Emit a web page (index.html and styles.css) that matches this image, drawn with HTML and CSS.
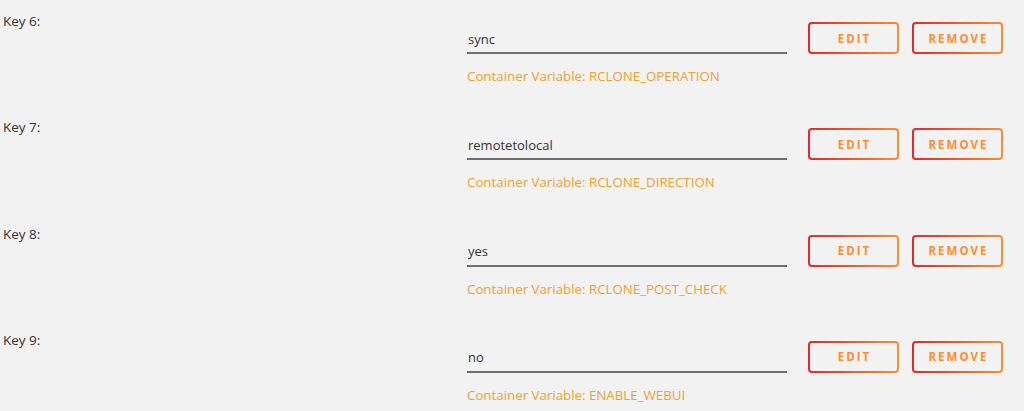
FILE: index.html
```html
<!doctype html>
<html lang="en">
<head>
  <title>Template variables</title>
  <meta charset="utf-8">
  <link rel="stylesheet" href="styles.css">
</head>
<body>

<div class="configList">

  <div class="configRow">
    <div class="configLabel">Key 6:</div>
    <div class="configBody">
      <div class="configLine">
        <input class="configInput" value="sync" readonly/>
        <button class="gradButton">Edit</button>
        <button class="gradButton">Remove</button>
      </div>
      <div class="configHint">Container Variable: RCLONE_OPERATION</div>
    </div>
  </div>

  <div class="configRow">
    <div class="configLabel">Key 7:</div>
    <div class="configBody">
      <div class="configLine">
        <input class="configInput" value="remotetolocal" readonly/>
        <button class="gradButton">Edit</button>
        <button class="gradButton">Remove</button>
      </div>
      <div class="configHint">Container Variable: RCLONE_DIRECTION</div>
    </div>
  </div>

  <div class="configRow">
    <div class="configLabel">Key 8:</div>
    <div class="configBody">
      <div class="configLine">
        <input class="configInput" value="yes" readonly/>
        <button class="gradButton">Edit</button>
        <button class="gradButton">Remove</button>
      </div>
      <div class="configHint">Container Variable: RCLONE_POST_CHECK</div>
    </div>
  </div>

  <div class="configRow">
    <div class="configLabel">Key 9:</div>
    <div class="configBody">
      <div class="configLine">
        <input class="configInput" value="no" readonly/>
        <button class="gradButton">Edit</button>
        <button class="gradButton">Remove</button>
      </div>
      <div class="configHint">Container Variable: ENABLE_WEBUI</div>
    </div>
  </div>

</div>

</body>
</html>
```

FILE: styles.css
```css
html, body {
  margin: 0;
  background-color: #f2f2f2;
}

body {
  font-family: "Open Sans", "Noto Sans", sans-serif;
  font-size: 13px;
  color: #3b3b3b;
  overflow: hidden;
}

.configList {
  padding-left: 3px;
}

.configRow {
  display: flex;
  height: 106.33px;
  box-sizing: border-box;
  padding-top: 11px;
}

.configLabel {
  width: 464px;
  line-height: 20px;
  font-size: 13.5px;
  color: #333;
}

.configBody {
  margin-top: 11px;
}

.configLine {
  display: flex;
  align-items: center;
}

.configInput {
  width: 320px;
  height: 32px;
  box-sizing: border-box;
  margin: 0 21px 0 0;
  padding: 3px 1px 0;
  border: none;
  border-bottom: 2px solid #6f6f6f;
  background: transparent;
  font-family: inherit;
  font-size: 13px;
  color: #333;
  outline: none;
}

.gradButton {
  width: 91px;
  height: 32px;
  box-sizing: border-box;
  margin-right: 13px;
  padding: 0 0 0 2px;
  border: 2px solid transparent;
  border-radius: 4px;
  background: linear-gradient(#f2f2f2, #f2f2f2) padding-box,
              linear-gradient(90deg, #e22828, #ff8c2f) border-box;
  color: #ff8c2f;
  font-family: inherit;
  font-size: 11.5px;
  font-weight: bold;
  letter-spacing: 2px;
  text-transform: uppercase;
}

.configHint {
  margin-top: 12px;
  line-height: 20px;
  color: #f0a02f;
  font-size: 13.3px;
}
```
